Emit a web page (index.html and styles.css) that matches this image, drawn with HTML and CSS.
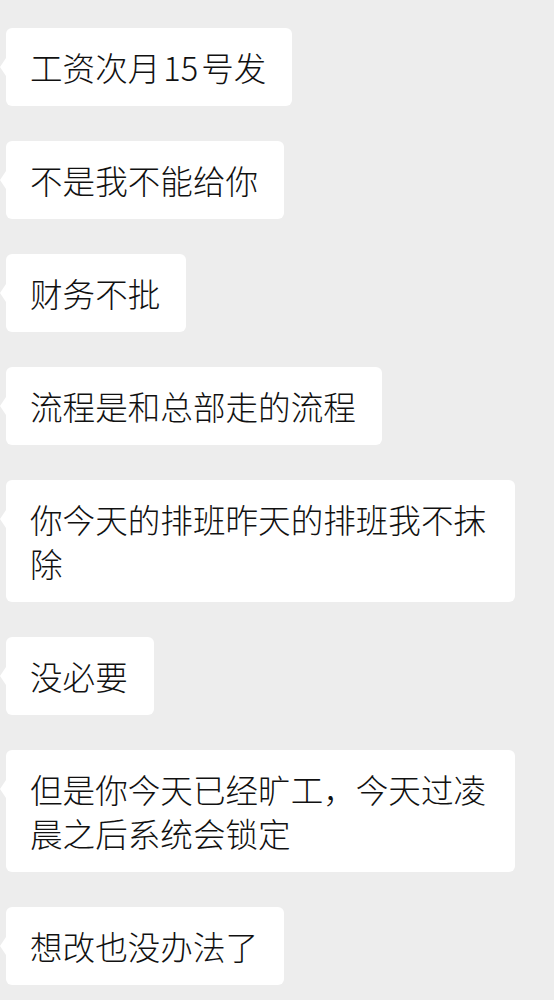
FILE: index.html
```html
<!DOCTYPE html>
<html lang="zh-CN">
<head>
<meta charset="utf-8">
<link rel="stylesheet" href="styles.css">
</head>
<body>
<div class="chat">
  <div class="msg"><div class="bubble">工资次月<span class="num">15</span>号发</div></div>
  <div class="msg"><div class="bubble">不是我不能给你</div></div>
  <div class="msg"><div class="bubble">财务不批</div></div>
  <div class="msg"><div class="bubble">流程是和总部走的流程</div></div>
  <div class="msg"><div class="bubble">你今天的排班昨天的排班我不抹除</div></div>
  <div class="msg"><div class="bubble">没必要</div></div>
  <div class="msg"><div class="bubble">但是你今天已经旷工，今天过凌晨之后系统会锁定</div></div>
  <div class="msg"><div class="bubble">想改也没办法了</div></div>
</div>
</body>
</html>
```
FILE: styles.css
```css
html, body {
  margin: 0;
  padding: 0;
  background: #ededed;
}
body {
  font-family: "Noto Sans CJK SC", "Noto Sans", sans-serif;
  color: #111111;
}
.chat {
  display: flex;
  flex-direction: column;
  gap: 35px;
  padding: 28px 0 0 6px;
}
.msg {
  display: flex;
}
.bubble {
  position: relative;
  background: #ffffff;
  border-radius: 6px;
  max-width: 509px;
  box-sizing: border-box;
  padding: 17px 26px 17px 24px;
  font-size: 32.6px;
  font-weight: 300;
  line-height: 44px;
}
.num {
  margin: 0 3px;
}
.bubble::before {
  content: "";
  position: absolute;
  left: -6px;
  top: 30px;
  border-style: solid;
  border-width: 9px 6px 9px 0;
  border-color: transparent #ffffff transparent transparent;
}
```
